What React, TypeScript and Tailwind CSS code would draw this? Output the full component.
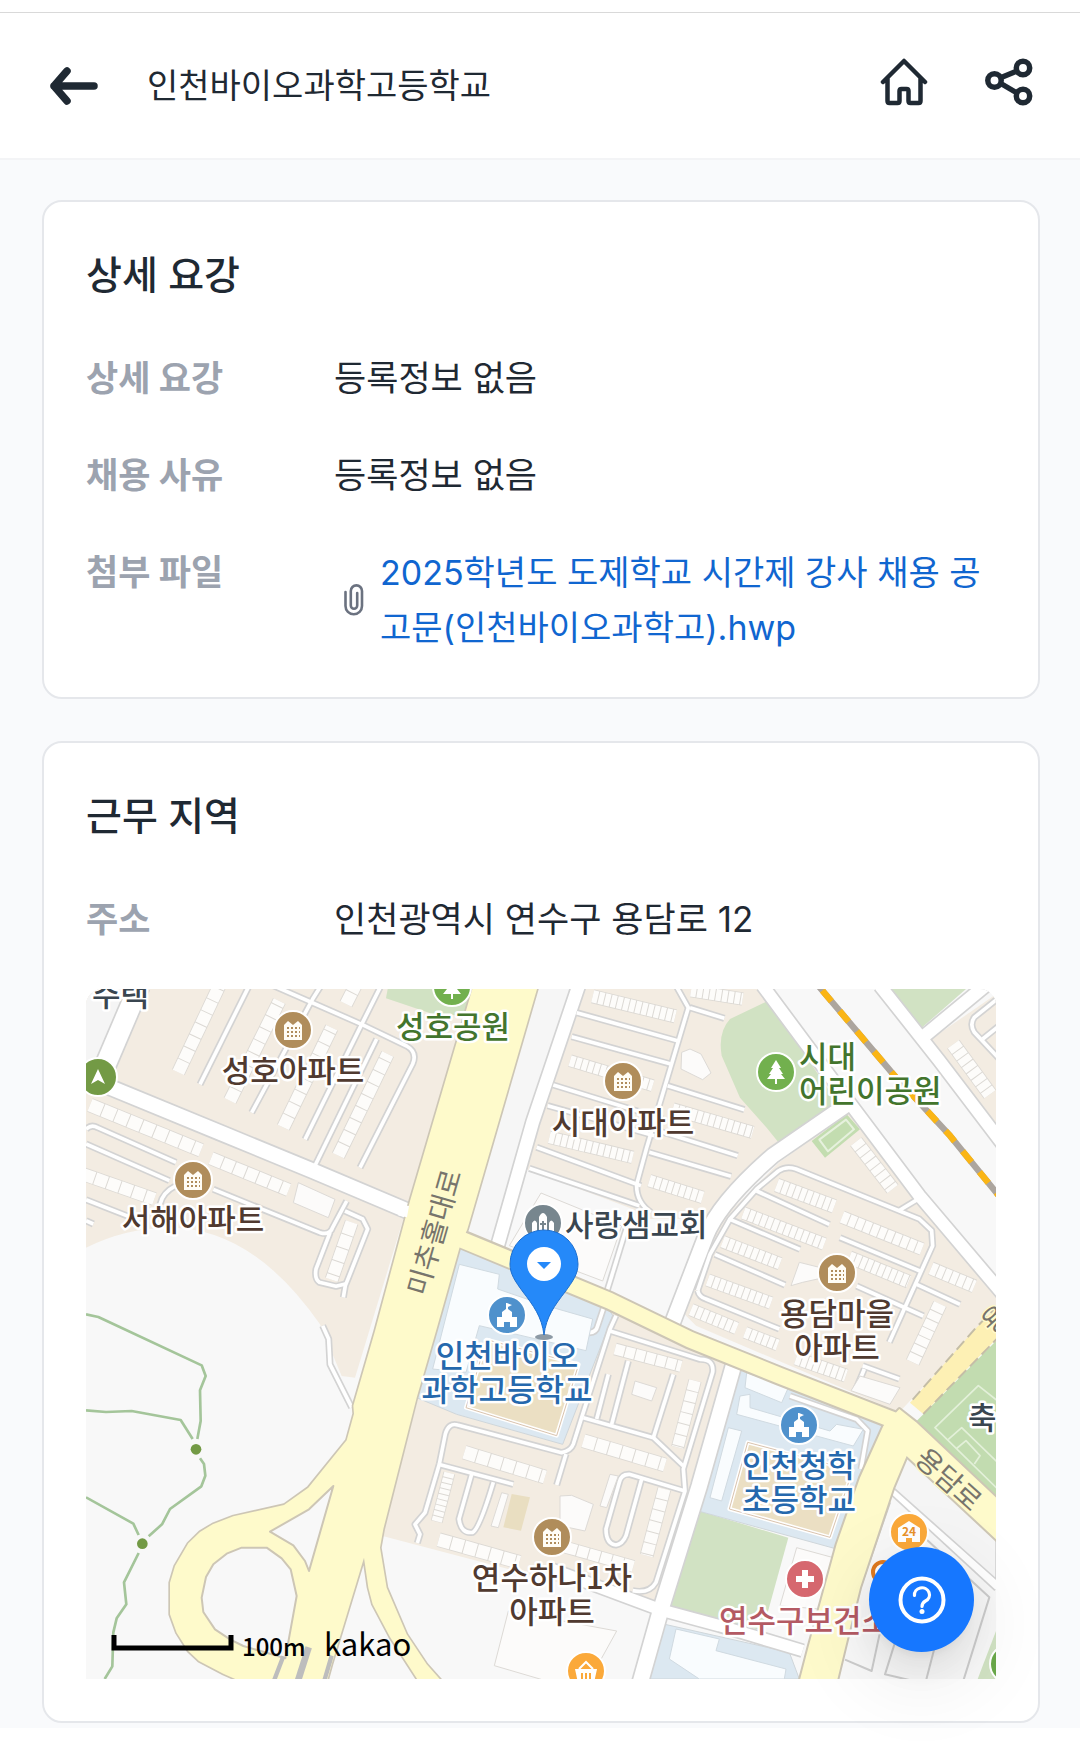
import type { ReactNode } from 'react';

const FONT = "font-['Inter','Noto_Sans_CJK_KR',sans-serif]";

// Geometry below is drawn on a 2730 x 2070 grid, labels and pins on 910 x 690.

const beige = [
  'M0 0H1162L807 1166L767 1161L702 1006Q500 716 252 716Q120 716 0 776Z',
  'M1490 0H2030L2280 350L2060 500L1880 690L1690 690L1640 660L1320 540Z',
  'M2290 370L2500 640L2730 910V960L2440 1270L1830 1010L1780 960L1900 700L2080 520Z',
  'M2527 156L2730 16V400L2690 360Z',
  'M997 1226L1112 1276L1430 1366L1582 960L1945 1100L1870 1400L1702 1855L887 1640Z',
];

const greens = [
  'M905 0H1162L1137 80L1040 75L900 28Z',
  'M2047 35L1932 90Q1895 130 1907 200L1962 326L2042 416L2082 466L2260 350Z',
  'M2412 0H2640L2502 121Z',
  'M1840 1566L2107 1646L2030 1925L1747 1850Z',
  'M2740 1900L2675 2070H2740Z',
];

const blues = [
  'M1122 771L1560 945L1580 980L1430 1366L1112 1276L992 1226L1042 1056Z',
  'M1967 1126L2392 1311L2322 1466L2252 1680L1837 1566Z',
  'M1737 1906L2110 1990L2140 2070H1687Z',
];

const wideRoads: [string, number][] = [
  ['M-20 240L60 290L400 430L680 545L1010 685', 44],
  ['M160 -10L45 260', 60],
  ['M1478 -10L1340 400L1232 780', 38],
  ['M2285 345L2060 500Q1900 640 1860 740L1760 1000', 44],
  ['M2030 -10L2290 340L2500 620L2750 915', 36],
  ['M2382 -10L2560 215L2750 465', 36],
  ['M2510 145L2710 -20', 38],
  ['M1948 1110L1840 1490L1722 1870L1660 2090', 46],
  ['M1400 1742L1722 1862L1900 1910L2150 1985', 34],
  ['M2420 1495L2740 1790', 34],
];

const lanes = [
  'M342 286L487 -5',
  'M497 371L680 30L705 -10',
  'M657 451L827 106L885 -10',
  'M562 -10L827 106L962 171Q995 190 980 225L822 536',
  'M682 540L872 150',
  'M0 421Q15 405 35 416L270 520',
  'M0 465L250 575',
  'M382 601L702 731Q732 740 740 715L782 636',
  'M222 646Q230 610 270 590',
  'M0 632L160 695',
  'M0 695L22 705',
  'M777 666L830 690L845 720L778 890L772 925',
  'M732 731L690 840Q685 870 700 880L750 892L778 885',
  'M710 1010L728 1050L732 1126L797 1255',
  'M1472 71L1777 156',
  'M1457 143L1757 226',
  'M1402 288L1732 390',
  'M1385 350L1705 440',
  'M1352 475L1665 590',
  'M1330 538L1660 650',
  'M1770 -10L1807 56L1682 476L1652 586Q1650 640 1695 670',
  'M1812 56L1915 88',
  'M1745 290L1975 362',
  'M1700 420L1955 500',
  'M1690 490L1935 562',
  'M1622 715L1562 910',
  'M1835 905L1872 796L1932 690L2012 600L2077 546Q2100 530 2130 540L2500 690L2537 725L2540 770L2410 1060',
  'M1835 905Q1840 925 1860 930L2080 1020',
  'M2012 606L2230 706',
  'M1932 691L2142 781',
  'M1887 796L2097 888',
  'M2262 746L2502 846',
  'M2312 891L2512 981',
  'M2492 886L2622 946',
  'M2437 666L2500 628',
  'M2335 1140L2310 1200',
  'M2330 1130L2440 1170',
  'M2740 25L2665 85Q2650 105 2665 130L2740 210',
  'M2690 150L2740 110',
  'M1060 1425L1078 1335Q1088 1300 1115 1308L1427 1391Q1455 1385 1462 1365L1490 1276L1572 1020L1590 980',
  'M1060 1425L1017 1571L987 1606L1002 1636L994 1662',
  'M1440 1395L1412 1488',
  'M1057 1426L1282 1486',
  'M1157 1456L1119 1590Q1125 1635 1160 1630Q1180 1620 1222 1480',
  'M1572 1026L1842 1111Q1885 1110 1880 1150L1792 1440L1797 1506L1710 1780Q1690 1815 1640 1805',
  'M1492 1286L1702 1346L1792 1431',
  'M1567 1156L1532 1290',
  'M1627 1116L1577 1306',
  'M1762 1156L1702 1346',
  'M1797 1506L1630 1456Q1605 1455 1600 1480L1560 1620Q1560 1665 1590 1668Q1610 1665 1620 1640L1667 1470',
  'M2112 1221L2312 1291L2345 1325L2325 1440',
  'M1270 940L1500 1030Q1530 1035 1535 1010L1555 950',
];

// path, depth of the row, width of a single house
const houses: [string, number, number][] = [
  ['M277 250L400 -10', 42, 40],
  ['M432 335L580 36', 42, 40],
  ['M592 415L737 116', 42, 40],
  ['M757 500L905 195', 42, 40],
  ['M780 45L808 -10', 42, 40],
  ['M12 348L345 484', 44, 42],
  ['M375 508L608 603', 42, 38],
  ['M-10 555L205 630', 42, 40],
  ['M797 700L737 872', 42, 42],
  ['M1520 22L1768 82', 42, 19],
  ['M1452 215L1700 290', 38, 19],
  ['M1390 445L1640 505', 40, 19],
  ['M1690 575L1850 625', 40, 19],
  ['M1815 5L1970 30', 40, 19],
  ['M1760 360L2000 430', 40, 19],
  ['M2602 166L2712 316', 46, 24],
  ['M2072 588L2245 652', 44, 19],
  ['M1972 672L2215 765', 40, 19],
  ['M2268 684L2508 780', 40, 24],
  ['M1910 758L2082 824', 40, 19],
  ['M2290 805L2468 878', 42, 19],
  ['M1865 873L2055 942', 40, 19],
  ['M1815 962L1952 1018', 40, 19],
  ['M1977 1030L2075 1068', 38, 19],
  ['M2535 838L2665 892', 42, 22],
  ['M2310 458L2420 600', 44, 24],
  ['M2562 945L2480 1120', 44, 28],
  ['M2130 1108L2280 1160', 42, 19],
  ['M1135 1390L1377 1464', 44, 40],
  ['M1587 1080L1785 1132', 38, 32],
  ['M1827 1175L1775 1375', 40, 34],
  ['M1492 1355L1737 1428', 44, 40],
  ['M1735 1500L1682 1700', 42, 34],
  ['M1090 1452L1052 1598', 36, 17],
  ['M1058 1652L1300 1720', 44, 40],
  ['M1440 1675L1642 1732', 38, 36],
];

const buildings = [
  'M637 581L747 631L727 686L622 641Z',
  'M1787 190L1812 180L1845 195L1875 252L1850 272L1785 240Z',
  'M2322 1161L2442 1196L2412 1246L2295 1205Z',
  'M2140 820L2200 835L2240 860L2150 880L2115 890Z',
  'M1647 1176L1712 1196L1697 1236L1637 1216Z',
  'M1247 1511L1267 1516L1237 1616L1215 1611Z',
  'M1422 1521L1457 1519L1522 1546L1497 1626L1422 1610Z',
  'M1572 1456L1597 1461L1562 1556L1542 1551Z',
  'M1267 1866L1592 1926L1540 2020L1500 2090H1430L1225 2030Z',
  'M1365 612L1607 711L1550 876L1270 770Z',
  'M2132 1676L2242 1706L2200 1860L2082 1850Z',
];

const schoolBlocks = [
  'M1120 826L1240 856L1235 900L1380 950L1520 990L1500 1085L1180 1010L1140 1150L1040 1140Z',
  'M1982 1151L2107 1196L2087 1241L1977 1196Z',
  'M1962 1221L1992 1216V1256L2232 1326L2252 1306L2332 1321L2302 1371L1952 1276Z',
  'M1927 1316L1967 1326L1907 1536L1872 1526Z',
  'M1770 1920L1900 1950L1890 1985L2100 2040L2095 2070H1840L1750 2010Z',
];

const trails = [
  'M0 976L37 984L347 1129L359 1161L342 1204L344 1296L334 1350',
  'M0 1264L60 1269L137 1266L284 1293L320 1350',
  'M342 1408L354 1425L358 1460L346 1492L252 1560L228 1606L188 1642',
  'M0 1525L142 1604L158 1638',
  'M158 1692L114 1780L121 1846L92 1888L82 1930L79 2032L56 2070',
];

const mainRoad =
  'M1162 -10L972 636L867 1026L802 1250L804 1274L782 1354L667 1496L594 1548L442 1582L380 1606L342 1629L307 1663L267 1731L252 1781V1876L272 1931L307 1986L339 2016L412 2054L470 2080H722L737 2026L834 1706L847 1796L860 1846L912 1944L1000 2080H1070L1022 2026L962 1936L902 1796L882 1676L892 1620L992 1226L1050 1026L1122 771L1144 721L1356 -10Z';

const mainRoadHoles =
  'M742 1491L669 1561L552 1628L622 1669L657 1716L669 1746ZM467 1676H542L587 1708L614 1741L632 1821L598 2008L472 1971L432 1951L387 1921L352 1869L347 1826L360 1764L382 1726L422 1694Z';

const stationRoad =
  'M2392 1311L2322 1466L2252 1666L2167 1976L2140 2080H2252L2282 1956L2322 1796L2422 1496L2462 1401L2740 1660V1535L2492 1301L2440 1260Z';

function Streets() {
  return (
    <svg width="910" height="690" viewBox="0 0 2730 2070" strokeLinejoin="round">
      <rect width="2730" height="2070" fill="#f8f8f8" />
      <g fill="#f3ece2">
        {beige.map((d) => (
          <path key={d} d={d} />
        ))}
      </g>
      <path d="M0 0H185L60 260L0 240Z" fill="#f5f5f5" />
      <path d="M1354 0H1455L1212 761L1144 721Z" fill="#f6f6f6" />
      <g fill="#d1e2c3">
        {greens.map((d) => (
          <path key={d} d={d} />
        ))}
      </g>
      <g fill="#dce8f1" stroke="#cfd6da" strokeWidth="3">
        {blues.map((d) => (
          <path key={d} d={d} />
        ))}
      </g>
      <path d="M2730 1056L2492 1296L2730 1526Z" fill="#c2dcb0" />
      <path
        d="M2740 1240L2677 1190L2547 1316L2740 1505M2587 1351L2627 1316L2740 1425M2610 1380L2640 1355L2682 1400L2665 1425"
        fill="none"
        stroke="#e3f0d9"
        strokeWidth="5"
      />
      <path d="M2177 456L2282 376L2322 421L2217 506Z" fill="#c3ddb0" />
      <path d="M2200 452L2280 392L2304 421L2226 487Z" fill="none" stroke="#e6f1dd" strokeWidth="6" />

      <g fill="none" stroke="#d3d3d3">
        {wideRoads.map(([d, w]) => (
          <path key={d} d={d} strokeWidth={w + 10} />
        ))}
        {lanes.map((d) => (
          <path key={d} d={d} strokeWidth="21" />
        ))}
      </g>
      <g fill="none" stroke="#ffffff">
        {wideRoads.map(([d, w]) => (
          <path key={d} d={d} strokeWidth={w} />
        ))}
        {lanes.map((d) => (
          <path key={d} d={d} strokeWidth="11" />
        ))}
      </g>

      {houses.map(([d, w, size]) => (
        <g key={d} fill="none">
          <path d={d} stroke="#dcd9d4" strokeWidth={w} />
          <path d={d} stroke="#fdfcfa" strokeWidth={w - 5} strokeDasharray={`${size - 3} 3`} />
        </g>
      ))}
      <g fill="#fcfbfa" stroke="#dddad6" strokeWidth="3">
        {buildings.map((d) => (
          <path key={d} d={d} />
        ))}
      </g>
      <g fill="#f9fcfe" stroke="#d0dae1" strokeWidth="3">
        {schoolBlocks.map((d) => (
          <path key={d} d={d} />
        ))}
      </g>
      <g fill="#ebdfc3" stroke="#ffffff" strokeWidth="12">
        <path d="M1202 1052L1478 1126L1412 1340L1140 1256Z" />
        <path d="M1985 1360L2300 1444L2232 1645L1930 1560Z" />
      </g>
      <g fill="none" stroke="#d9c3ae" strokeWidth="3">
        <path d="M1202 1052L1478 1126L1412 1340L1140 1256Z" />
        <path d="M1985 1360L2300 1444L2232 1645L1930 1560Z" />
      </g>
      <path d="M1277 1515L1332 1525L1305 1625L1252 1615Z" fill="#e9dec1" />

      {/* railway */}
      <path d="M2200 -6L2422 256L2592 440L2740 622" fill="none" stroke="#aca59e" strokeWidth="19" />
      <path
        d="M2200 -6L2422 256L2592 440L2740 622"
        fill="none"
        stroke="#fab515"
        strokeWidth="19"
        strokeDasharray="42 38"
        strokeDashoffset="-14"
      />

      {/* blocks east of the station road */}
      <path d="M2462 1401L2422 1496L2730 1770V1651Z" fill="#f5f5f5" stroke="#d3d3d3" strokeWidth="5" />
      <g fill="none" stroke="#cccccc" strokeWidth="6">
        <path d="M2412 1540L2322 1800M2520 1650L2710 1825L2632 2075" />
        <path d="M2382 1930L2357 2046L2277 2012" />
        <path d="M2427 1960L2397 2056L2500 2080M2550 1960L2520 2075" />
      </g>

      {/* yellow roads */}
      <path d="M2472 1241L2662 1026L2730 955V1051L2512 1275Z" fill="#fdf0b4" />
      <path d="M2480 1232L2668 1018L2740 945M2512 1275L2740 1042" fill="none" stroke="#c4bda6" strokeWidth="6" strokeDasharray="34 16" />
      <g stroke="#cdc6b5" strokeWidth="12" fill="none">
        <path d={mainRoad} strokeWidth="10" />
        <path d="M1125 750L1570 935L1812 1052L2080 1160L2440 1300" strokeWidth="60" />
        <path d={stationRoad} />
      </g>
      <g fill="#fefacb">
        <path d={mainRoad} />
        <path
          d="M1110 745L1570 935L1812 1052L2080 1160L2440 1300"
          fill="none"
          stroke="#fefacb"
          strokeWidth="48"
        />
        <path d={stationRoad} />
      </g>
      <path d={mainRoadHoles} fill="#f8f8f8" stroke="#cdc6b5" strokeWidth="6" />
      <path d="M592 2002L564 2075M737 2000L715 2075" stroke="#bdbdbd" strokeWidth="13" />
      <path d="M668 1975L636 2075" stroke="#bdbdbd" strokeWidth="20" />
      <path d="M966 668L940 663" stroke="#ffffff" strokeWidth="34" />

      <g fill="none" stroke="#a4c59a" strokeWidth="8">
        {trails.map((d) => (
          <path key={d} d={d} />
        ))}
      </g>
      <circle cx="330" cy="1381" r="16" fill="#739a45" />
      <circle cx="169" cy="1664" r="16" fill="#739a45" />
    </svg>
  );
}

function Marker({ x, y, color, children }: { x: number; y: number; color: string; children?: ReactNode }) {
  return (
    <g transform={`translate(${x} ${y})`}>
      <circle r="19" fill={color} stroke="#ffffff" strokeWidth="2" />
      {children}
    </g>
  );
}

function Apartment({ x, y }: { x: number; y: number }) {
  return (
    <Marker x={x} y={y} color="#b08d5b">
      <path d="M-9 10V-5L-5 -9L0 -5L5 -9L9 -5V10Z" fill="#fffdf5" />
      <path d="M-6 -2H7M-6 2H7M-6 6H7" stroke="#b08d5b" strokeWidth="2" strokeDasharray="2 2" />
    </Marker>
  );
}

function Tree({ x, y }: { x: number; y: number }) {
  return (
    <Marker x={x} y={y} color="#72b04e">
      <path d="M0 -12L5 -4H3L7 2H5L9 7H1V12H-1V7H-9L-5 2H-7L-3 -4H-5Z" fill="#ffffff" />
    </Marker>
  );
}

function School({ x, y }: { x: number; y: number }) {
  return (
    <Marker x={x} y={y} color="#4f91cc">
      <path d="M0 -12L5 -10L1 -8V-6L5 -3V2H10V12H3V7H-3V12H-10V2H-5V-3L-1 -6V-12Z" fill="#ffffff" />
    </Marker>
  );
}

type Label = { x: number; y: number; text: string; color: string; start?: boolean };

const BROWN = '#503a30';
const GREEN = '#43752d';
const BLUE = '#2568ad';
const SLATE = '#3a4650';

const labels: Label[] = [
  { x: 6, y: 17, text: '주택', color: SLATE, start: true },
  { x: 207, y: 93, text: '성호아파트', color: BROWN },
  { x: 367, y: 49, text: '성호공원', color: GREEN },
  { x: 107, y: 242, text: '서해아파트', color: BROWN },
  { x: 537, y: 145, text: '시대아파트', color: BROWN },
  { x: 713, y: 79, text: '시대', color: GREEN, start: true },
  { x: 713, y: 113, text: '어린이공원', color: GREEN, start: true },
  { x: 479, y: 247, text: '사랑샘교회', color: SLATE, start: true },
  { x: 751, y: 336, text: '용담마을', color: BROWN },
  { x: 751, y: 370, text: '아파트', color: BROWN },
  { x: 421, y: 378, text: '인천바이오', color: BLUE },
  { x: 421, y: 412, text: '과학고등학교', color: BLUE },
  { x: 713, y: 488, text: '인천청학', color: BLUE },
  { x: 713, y: 522, text: '초등학교', color: BLUE },
  { x: 466, y: 600, text: '연수하나1차', color: BROWN },
  { x: 466, y: 634, text: '아파트', color: BROWN },
  { x: 633, y: 643, text: '연수구보건소', color: '#b45a63', start: true },
  { x: 882, y: 440, text: '축구장', color: SLATE, start: true },
];

function AreaMap() {
  return (
    <svg
      viewBox="0 0 910 690"
      role="img"
      aria-label="인천바이오과학고등학교 지도"
      className="mt-[42px] block h-auto w-full overflow-hidden rounded-t-[16px] font-['Noto_Sans_CJK_KR',sans-serif]">
      <Streets />

      <g fontSize="28" fill="#77746c" textAnchor="middle" stroke="#fefacb" strokeWidth="3" paintOrder="stroke">
        <text transform="translate(358 246) rotate(-74)">미추홀대로</text>
        <text transform="translate(856 498) rotate(42)">용담로</text>
        <text transform="translate(916 338) rotate(-42)">용</text>
      </g>

      <Apartment x={207} y={41} />
      <Apartment x={107} y={191} />
      <Apartment x={537} y={92} />
      <Apartment x={751} y={284} />
      <Apartment x={466} y={548} />
      <Tree x={366} y={-2} />
      <Tree x={690} y={83} />
      <School x={421} y={326} />
      <School x={713} y={436} />
      <Marker x={12} y={88} color="#739a45">
        <path d="M0 -8L7 7L0 3L-7 7Z" fill="#ffffff" />
      </Marker>
      <Marker x={457} y={234} color="#77868e">
        <path d="M-4 10V-6Q0 -14 4 -6V10ZM-11 10V0Q-8 -5 -6 0V10ZM6 10V0Q8 -5 11 0V10Z" fill="#ffffff" />
        <path d="M0 -2V7M-3 1H3" stroke="#77868e" strokeWidth="2" />
      </Marker>
      <Marker x={719} y={590} color="#d6686f">
        <path d="M-3 -9H3V-3H9V3H3V9H-3V3H-9V-3H-3Z" fill="#ffffff" />
      </Marker>
      <Marker x={823} y={543} color="#fba93a">
        <path d="M0 -11L11 -4V10H3V6H-3V10H-11V-4Z" fill="#ffffff" />
        <text y="4" textAnchor="middle" fontSize="12" fontWeight="700" fill="#e8912a">
          24
        </text>
      </Marker>
      <Marker x={500} y={682} color="#fba93a">
        <path d="M-11 -2H11L8 12H-8Z" fill="#ffffff" />
        <path d="M-7 -2L0 -9L7 -2" fill="none" stroke="#ffffff" strokeWidth="2" />
        <path d="M-4 2V10M0 2V10M4 2V10" stroke="#fba93a" strokeWidth="2" />
      </Marker>
      <Marker x={923} y={675} color="#6aa84a" />
      <circle cx="797" cy="583" r="10" fill="#ffffff" stroke="#e07a1f" strokeWidth="4" />

      <g fontSize="31" fontWeight="500" stroke="#ffffff" strokeWidth="5" strokeLinejoin="round" paintOrder="stroke">
        {labels.map(({ x, y, text, color, start }) => (
          <text key={`${x}-${y}`} x={x} y={y} fill={color} textAnchor={start ? 'start' : 'middle'}>
            {text}
          </text>
        ))}
      </g>

      <ellipse cx="458" cy="348" rx="9" ry="3" fill="#8d9aa5" />
      <path
        d="M458 346C456 328 447 316 437 303C429 292 424 285 424 275A34 34 0 0 1 492 275C492 285 487 292 479 303C469 316 460 328 458 346Z"
        fill="#2589f9"
        stroke="#1c6fd0"
      />
      <circle cx="458" cy="275" r="17" fill="#ffffff" />
      <path d="M451 273H465L458 280Z" fill="#2589f9" />

      <path d="M28 646V659H145V646" fill="none" stroke="#000000" strokeWidth="5" />
      <text x="156" y="667" fontSize="24" fontWeight="500">
        100m
      </text>
      <text x="238" y="667" fontSize="31">
        kakao
      </text>
    </svg>
  );
}

function Card({ title, children }: { title: string; children: ReactNode }) {
  return (
    <section className="rounded-[20px] border-2 border-[#e5e7eb] bg-white p-[42px]">
      <h2 className="mb-[45px] text-[39px] leading-[62px] font-medium">{title}</h2>
      {children}
    </section>
  );
}

function Row({ label, children }: { label: string; children: ReactNode }) {
  return (
    <div className="flex text-[35px] leading-[55px]">
      <dt className="w-[248px] shrink-0 font-bold text-[#9ca3af]">{label}</dt>
      <dd className="flex-1">{children}</dd>
    </div>
  );
}

export default function App() {
  return (
    <div className={`${FONT} bg-white text-[#1f2933]`} lang="ko">
      <header className="mt-3 flex h-[148px] items-center border-t border-b-2 border-t-[#d9d9d9] border-b-[#f3f4f6] pr-[47px] pl-[50px]">
        <button type="button" aria-label="뒤로">
          <svg width="48" height="48" viewBox="0 0 48 48" fill="none" stroke="currentColor" strokeWidth="7.5" strokeLinecap="round" strokeLinejoin="round">
            <path d="M4 24H44M17 9L4 24L17 39" />
          </svg>
        </button>
        <h1 className="ml-[49px] flex-1 text-[34px] leading-[55px]">인천바이오과학고등학교</h1>
        <nav className="flex gap-[57px] pb-2">
          <a href="#" aria-label="홈">
            <svg width="48" height="48" viewBox="0 0 48 48" fill="none" stroke="currentColor" strokeWidth="4.5" strokeLinecap="round" strokeLinejoin="round">
              <path d="M3 24L24 3L45 24M7.5 20V43Q7.5 45 9.5 45H17.5Q19.5 45 19.5 43V33Q19.5 31 21.5 31H26.5Q28.5 31 28.5 33V43Q28.5 45 30.5 45H38.5Q40.5 45 40.5 43V20" />
            </svg>
          </a>
          <button type="button" aria-label="공유">
            <svg width="48" height="48" viewBox="0 0 48 48" fill="none" stroke="currentColor" strokeWidth="5.5">
              <circle cx="38" cy="10" r="6.7" />
              <circle cx="9.5" cy="22.5" r="6.7" />
              <circle cx="38" cy="38" r="6.7" />
              <path d="M15 20L32 13M15 25L32 35" />
            </svg>
          </button>
        </nav>
      </header>

      <main className="flex flex-col gap-[42px] bg-[#f9fafc] pt-10 pr-10 pb-[5px] pl-[42px]">
        <Card title="상세 요강">
          <dl className="flex flex-col gap-[42px]">
            <Row label="상세 요강">등록정보 없음</Row>
            <Row label="채용 사유">등록정보 없음</Row>
            <Row label="첨부 파일">
              <div className="flex items-center">
                <svg className="mr-[14px] ml-[9px] shrink-0" width="23" height="34" viewBox="0 0 23 34" fill="none" stroke="#6b7280" strokeWidth="2.6" strokeLinecap="round">
                  <path d="M2.5 9V23A8.2 8.2 0 0 0 19 23V8A5.6 5.6 0 0 0 7.8 8V22.5A3.2 3.2 0 0 0 14.2 22.5V10" />
                </svg>
                <a href="#" className="flex-1 text-[34px] break-all text-[#1066d0]">
                  2025학년도 도제학교 시간제 강사 채용 공고문(인천바이오과학고).hwp
                </a>
              </div>
            </Row>
          </dl>
        </Card>

        <Card title="근무 지역">
          <dl>
            <Row label="주소">인천광역시 연수구 용담로 12</Row>
          </dl>
          <AreaMap />
        </Card>
      </main>
      <div className="h-5" />

      <button
        type="button"
        aria-label="도움말"
        className="fixed right-[106px] bottom-[95px] flex size-[105px] items-center justify-center rounded-full bg-[#1677ff] shadow-[0_16px_42px_rgba(0,0,0,0.08),0_8px_16px_-10px_rgba(0,0,0,0.12),0_24px_73px_21px_rgba(0,0,0,0.05)]">
        <svg width="48" height="48" viewBox="0 0 48 48" fill="none" stroke="#ffffff" strokeLinecap="round">
          <circle cx="24" cy="24" r="21.5" strokeWidth="4" />
          <path d="M16.5 19.5A7.5 7 0 1 1 27.5 25Q24 27 24 30.5" strokeWidth="3.2" />
          <circle cx="24" cy="35.5" r="2.5" fill="#ffffff" stroke="none" />
        </svg>
      </button>
    </div>
  );
}
